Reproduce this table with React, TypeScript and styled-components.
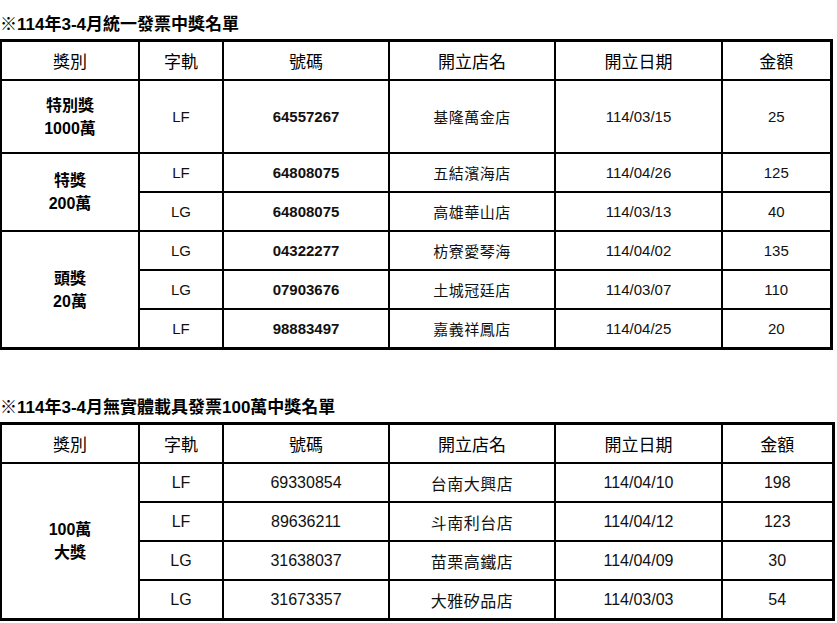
import React from "react";
import styled, { createGlobalStyle } from "styled-components";

type Row = { track: string; number: string; store: string; date: string; amount: string };
type Group = { label: string[]; rows: Row[] };

const firstGroups: Group[] = [
  {
    label: ["特別獎", "1000萬"],
    rows: [{ track: "LF", number: "64557267", store: "基隆萬金店", date: "114/03/15", amount: "25" }],
  },
  {
    label: ["特獎", "200萬"],
    rows: [
      { track: "LF", number: "64808075", store: "五結濱海店", date: "114/04/26", amount: "125" },
      { track: "LG", number: "64808075", store: "高雄華山店", date: "114/03/13", amount: "40" },
    ],
  },
  {
    label: ["頭獎", "20萬"],
    rows: [
      { track: "LG", number: "04322277", store: "枋寮愛琴海", date: "114/04/02", amount: "135" },
      { track: "LG", number: "07903676", store: "土城冠廷店", date: "114/03/07", amount: "110" },
      { track: "LF", number: "98883497", store: "嘉義祥鳳店", date: "114/04/25", amount: "20" },
    ],
  },
];

const secondGroups: Group[] = [
  {
    label: ["100萬", "大獎"],
    rows: [
      { track: "LF", number: "69330854", store: "台南大興店", date: "114/04/10", amount: "198" },
      { track: "LF", number: "89636211", store: "斗南利台店", date: "114/04/12", amount: "123" },
      { track: "LG", number: "31638037", store: "苗栗高鐵店", date: "114/04/09", amount: "30" },
      { track: "LG", number: "31673357", store: "大雅矽品店", date: "114/03/03", amount: "54" },
    ],
  },
];

const headers = ["獎別", "字軌", "號碼", "開立店名", "開立日期", "金額"];
const colWidths = [138, 84, 166, 166, 167, 109];

const GlobalStyle = createGlobalStyle`
  html, body {
    margin: 0;
    padding: 0;
    background: #fff;
  }
  body {
    font-family: "Liberation Sans", "Noto Sans CJK TC", sans-serif;
    color: #000;
  }
`;

const Page = styled.div`
  display: flex;
  flex-direction: column;
  padding-top: 15px;
`;

const Section = styled.section<{ $gap?: number }>`
  display: flex;
  flex-direction: column;
  margin-top: ${(p) => p.$gap ?? 0}px;
`;

const Title = styled.h3`
  margin: 0 0 4px 0;
  font-size: 17px;
  font-weight: bold;
  line-height: 20px;
  white-space: nowrap;
`;

const Table = styled.table<{ $width: number }>`
  width: ${(p) => p.$width}px;
  border-collapse: collapse;
  table-layout: fixed;
  border: 3px solid #000;
  border-left-width: 2px;
`;

const HeadCell = styled.th`
  height: 37px;
  padding: 0;
  border: 2px solid #000;
  font-size: 17px;
  font-weight: normal;
  text-align: center;
  vertical-align: middle;
`;

const PrizeCell = styled.td`
  padding: 0;
  border: 2px solid #000;
  font-size: 16px;
  font-weight: bold;
  line-height: 23px;
  text-align: center;
  vertical-align: middle;
`;

const Cell = styled.td<{ $bold?: boolean; $size: number; $h: number }>`
  height: ${(p) => p.$h}px;
  padding: 0;
  border: 2px solid #000;
  font-size: ${(p) => p.$size}px;
  font-weight: ${(p) => (p.$bold ? "bold" : "normal")};
  color: #111;
  text-align: center;
  vertical-align: middle;
  white-space: nowrap;
`;

const Store = styled.span`
  letter-spacing: 0.5px;
`;

type TableProps = {
  groups: Group[];
  width: number;
  size: number;
  rowH: number;
  boldNumber: boolean;
};

const PrizeTable: React.FC<TableProps> = ({ groups, width, size, rowH, boldNumber }) => (
  <Table $width={width}>
    <colgroup>
      {colWidths.map((w, i) => (
        <col key={i} style={{ width: i === colWidths.length - 1 ? w + (width - 830) : w }} />
      ))}
    </colgroup>
    <thead>
      <tr>
        {headers.map((h) => (
          <HeadCell key={h}>{h}</HeadCell>
        ))}
      </tr>
    </thead>
    <tbody>
      {groups.map((g) =>
        g.rows.map((r, i) => {
          const h = g.rows.length === 1 ? 71 : rowH;
          return (
            <tr key={g.label.join() + i}>
              {i === 0 && (
                <PrizeCell rowSpan={g.rows.length}>
                  {g.label[0]}
                  <br />
                  {g.label[1]}
                </PrizeCell>
              )}
              <Cell $size={size} $h={h}>{r.track}</Cell>
              <Cell $size={size} $h={h} $bold={boldNumber}>{r.number}</Cell>
              <Cell $size={size} $h={h}>
                <Store>{r.store}</Store>
              </Cell>
              <Cell $size={size} $h={h}>{r.date}</Cell>
              <Cell $size={size} $h={h}>{r.amount}</Cell>
            </tr>
          );
        })
      )}
    </tbody>
  </Table>
);

export default function App() {
  return (
    <>
      <GlobalStyle />
      <Page>
        <Section>
          <Title>※114年3-4月統一發票中獎名單</Title>
          <PrizeTable groups={firstGroups} width={830} size={15} rowH={37} boldNumber />
        </Section>
        <Section $gap={48}>
          <Title>※114年3-4月無實體載具發票100萬中獎名單</Title>
          <PrizeTable groups={secondGroups} width={832} size={16} rowH={37} boldNumber={false} />
        </Section>
      </Page>
    </>
  );
}
